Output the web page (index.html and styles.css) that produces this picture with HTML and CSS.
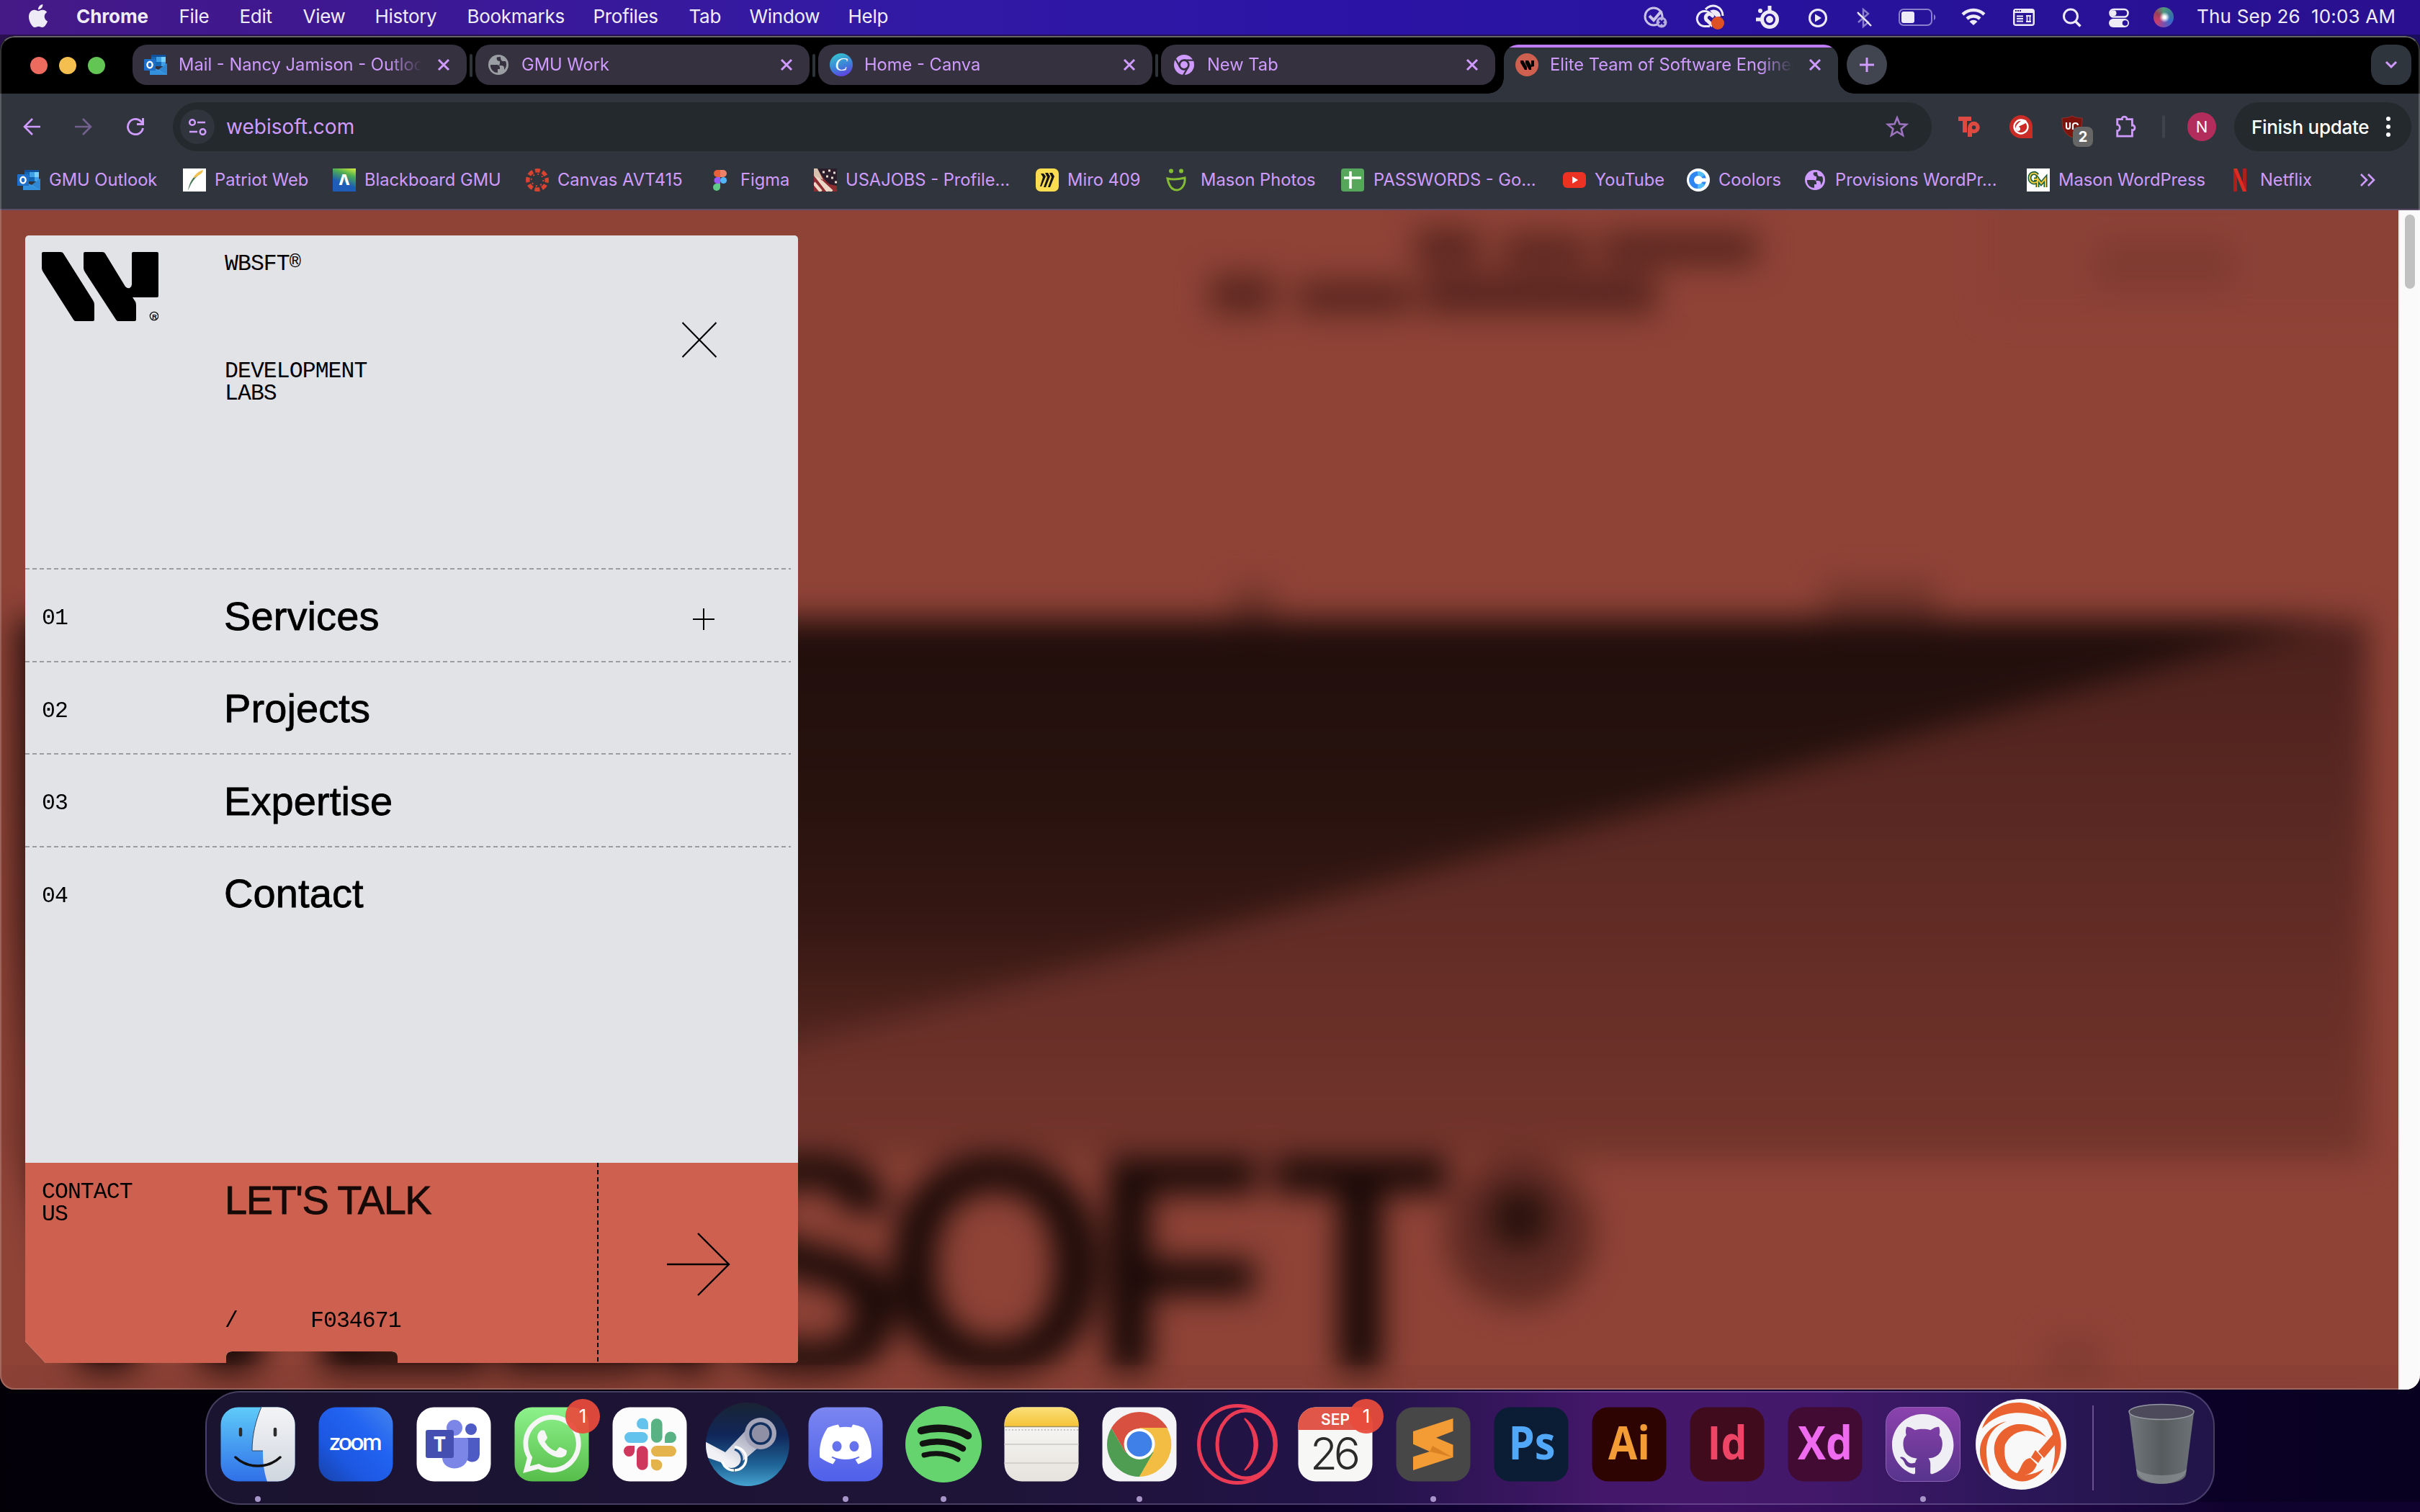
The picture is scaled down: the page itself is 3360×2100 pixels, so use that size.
FILE: index.html
```html
<!DOCTYPE html>
<html lang="en">
<head>
<meta charset="utf-8">
<title>Elite Team of Software Engineers</title>
<link rel="stylesheet" href="styles.css">
</head>
<body>
<svg class="defs" width="0" height="0" aria-hidden="true">
  <defs>
    <symbol id="close" viewBox="0 0 18 18"><path d="M2 2l14 14M16 2L2 16" stroke="currentColor" stroke-width="3" fill="none"/></symbol>
    <symbol id="outlook" viewBox="0 0 32 32">
      <path d="M10 2h20v16H10z" fill="#1565b5"/><path d="M17 5h7v7h-7z" fill="#3fa0e6"/><path d="M24 5h6v7h-6z" fill="#72d2fb"/><path d="M24 12h6v6h-6z" fill="#3fa0e6"/><path d="M10 2h20v3H10z" fill="#11509a"/>
      <path d="M8 18l12 5 12-9v16H8z" fill="#4ba7ea"/><path d="M8 18l24 12H8z" fill="#3390dc"/><path d="M20 23l12-9v16z" fill="#2f86d3"/>
      <rect y="8" width="16" height="16" rx="1" fill="#1f6fc9"/><ellipse cx="8" cy="16" rx="3.6" ry="4.3" fill="none" stroke="#fff" stroke-width="2.4"/>
    </symbol>
    <symbol id="globe" viewBox="0 0 28 28"><circle cx="14" cy="14" r="14" fill="currentColor"/><path d="M3 14h8c4 0 5 2 5 4v2h-3v5C7 25 2.500 20 3 14zM12 3.500C11 6 12 9 16 9v3c0 2-1 3-3 3h5c3 0 4 1.500 4 4v2c3-3 4-8 2-12h-3c-2 0-4-1-4-6z" fill="var(--hole)"/></symbol>
    <symbol id="chromeglyph" viewBox="0 0 28 28"><circle cx="14" cy="14" r="14" fill="currentColor"/><circle cx="14" cy="14" r="6.400" fill="none" stroke="var(--hole)" stroke-width="2.600"/><path d="M14 7.600h13M8.500 17.200L2 6M19.500 17.200L13 28.500" stroke="var(--hole)" stroke-width="2.400"/></symbol>
    <linearGradient id="gFinder" x1="0" y1="0" x2="0" y2="1"><stop offset="0" stop-color="#5fcbf9"/><stop offset="1" stop-color="#2f6fe8"/></linearGradient>
    <linearGradient id="gFinderR" x1="0" y1="0" x2="0" y2="1"><stop offset="0" stop-color="#f4f4f6"/><stop offset="1" stop-color="#cfd6df"/></linearGradient>
    <linearGradient id="gZoom" x1="1" y1="0" x2="0" y2="1"><stop offset="0" stop-color="#4484ec"/><stop offset=".35" stop-color="#2263f2"/><stop offset=".7" stop-color="#1c57e0"/><stop offset="1" stop-color="#1741a8"/></linearGradient>
    <linearGradient id="gWa" x1="0" y1="0" x2="0" y2="1"><stop offset="0" stop-color="#8df28b"/><stop offset="1" stop-color="#57bd4a"/></linearGradient>
    <linearGradient id="gSteam" x1="0" y1="0" x2="0" y2="1"><stop offset="0" stop-color="#1a2333"/><stop offset=".4" stop-color="#10275a"/><stop offset=".75" stop-color="#1f6597"/><stop offset="1" stop-color="#46a3d0"/></linearGradient>
    <linearGradient id="gArm" x1="1" y1="0" x2="0" y2="1"><stop offset="0" stop-color="#8c8fa8"/><stop offset=".7" stop-color="#f2f2f6"/></linearGradient>
    <linearGradient id="gDiscord" x1="0" y1="0" x2="0" y2="1"><stop offset="0" stop-color="#7b86f0"/><stop offset="1" stop-color="#4f60ea"/></linearGradient>
    <linearGradient id="gNote" x1="0" y1="0" x2="0" y2="1"><stop offset="0" stop-color="#fbfbfb"/><stop offset="1" stop-color="#e6e2dc"/></linearGradient>
    <linearGradient id="gNoteTop" x1="0" y1="0" x2="0" y2="1"><stop offset="0" stop-color="#fbe07a"/><stop offset="1" stop-color="#f5c437"/></linearGradient>
    <linearGradient id="gGit" x1="0" y1="0" x2="0" y2="1"><stop offset="0" stop-color="#8c42ad"/><stop offset="1" stop-color="#57348c"/></linearGradient>
    <linearGradient id="gTrash" x1="0" y1="0" x2="1" y2="0"><stop offset="0" stop-color="#71777c"/><stop offset=".5" stop-color="#565c5e"/><stop offset="1" stop-color="#6c7276"/></linearGradient>
    <clipPath id="tile"><rect x="16.500" y="16.500" width="103" height="103" rx="24"/></clipPath>
    <clipPath id="disc"><circle cx="68" cy="68" r="58"/></clipPath>
  </defs>
</svg>

<header class="menubar">
  <svg class="apple" viewBox="0 0 24 24"><path fill="#eeeaf6" d="M12.152 6.896c-.948 0-2.415-1.078-3.96-1.04-2.04.027-3.91 1.183-4.961 3.014-2.117 3.675-.546 9.103 1.519 12.09 1.013 1.454 2.208 3.09 3.792 3.039 1.52-.065 2.09-.987 3.935-.987 1.831 0 2.35.987 3.96.948 1.637-.026 2.676-1.48 3.676-2.948 1.156-1.688 1.636-3.325 1.662-3.415-.039-.013-3.182-1.221-3.22-4.857-.026-3.04 2.48-4.494 2.597-4.559-1.429-2.09-3.623-2.324-4.39-2.376-2-.156-3.675 1.09-4.61 1.09zM15.53 3.83c.843-1.012 1.4-2.427 1.245-3.83-1.207.052-2.662.805-3.532 1.818-.78.896-1.454 2.338-1.273 3.714 1.338.104 2.715-.688 3.559-1.701"/></svg>
  <nav class="menus"><span class="app-name">Chrome</span><span>File</span><span>Edit</span><span>View</span><span>History</span><span>Bookmarks</span><span>Profiles</span><span>Tab</span><span>Window</span><span>Help</span></nav>
  <div class="status">
    <svg viewBox="0 0 60 48" opacity=".75"><circle cx="28" cy="23" r="12" fill="none" stroke="#fff" stroke-width="3"/><path d="M22 22l6 6 11-13" fill="none" stroke="#fff" stroke-width="4"/><circle cx="39" cy="31" r="7.500" fill="#e6e2f4"/><path d="M36 28l6 6M42 28l-6 6" stroke="#2a139a" stroke-width="2.500"/></svg>
    <svg viewBox="0 0 60 48"><g fill="none" stroke="#eeeaf6"><path d="M30 36.500H22A10.500 10.500 0 1 1 32 21l3 3" stroke-width="3"/><path d="M24 13A13.500 13.500 0 0 1 48 22" stroke-width="3"/><path d="M34 36l-7-7a5 5 0 1 1 7-6" stroke-width="5"/></g><path d="M30 15c6-4 15 0 15 8l-6 1z" fill="#eeeaf6"/><circle cx="41" cy="32" r="9" fill="#de5125"/></svg>
    <svg viewBox="0 0 60 48"><circle cx="33" cy="27" r="13" fill="#eeeaf6"/><circle cx="33" cy="27" r="6.500" fill="none" stroke="#2a139a" stroke-width="3"/><path d="M33 8v8M14 27h8" stroke="#eeeaf6" stroke-width="5"/><circle cx="20" cy="15" r="3" fill="#eeeaf6"/></svg>
    <svg viewBox="0 0 60 48"><circle cx="30" cy="25" r="11.500" fill="none" stroke="#eeeaf6" stroke-width="3"/><path d="M26 19.500v11l9-5.500z" fill="#eeeaf6"/></svg>
    <svg viewBox="0 0 60 48"><path d="M22 31l14-12-7-6v24l7-6-14-12" fill="none" stroke="#8d80cc" stroke-width="2.400"/><path d="M21 17l19 19" stroke="#eeeaf6" stroke-width="2.400"/></svg>
    <svg viewBox="0 0 60 48"><rect x="6" y="13" width="45" height="22" rx="6" fill="none" stroke="#8b7ecb" stroke-width="2"/><rect x="9" y="16" width="18" height="16" rx="3" fill="#eeeaf6"/><path d="M54 20c3 1 3 7 0 8z" fill="#8b7ecb"/></svg>
    <svg viewBox="0 0 60 48"><g fill="none" stroke="#eeeaf6" stroke-width="4.500"><path d="M15 20a22 22 0 0 1 30 0"/><path d="M21 26a13.500 13.500 0 0 1 18 0"/></g><path d="M24.500 30a8 8 0 0 1 11 0L30 35z" fill="#eeeaf6"/></svg>
    <svg viewBox="0 0 60 48"><rect x="15" y="12" width="30" height="24" rx="4" fill="#eeeaf6"/><path d="M17.500 18h25v15.500h-25z" fill="#2a139a"/><path d="M20 22.500h9M20 26h9M20 29.500h9M33 22h7M33 30h7M34.500 21v10M38.500 21v10" stroke="#eeeaf6" stroke-width="1.800"/><path d="M18 15h8" stroke="#2a139a" stroke-width="2" stroke-dasharray="2 1"/></svg>
    <svg viewBox="0 0 60 48"><circle cx="28" cy="22.500" r="9.500" fill="none" stroke="#eeeaf6" stroke-width="3"/><path d="M34.500 29.500l7 7" stroke="#eeeaf6" stroke-width="3.600"/></svg>
    <svg viewBox="0 0 60 48"><rect x="17.500" y="13" width="25" height="10.500" rx="5.200" fill="none" stroke="#eeeaf6" stroke-width="2.600"/><circle cx="22.500" cy="18.200" r="4" fill="#eeeaf6"/><rect x="16" y="26" width="28" height="12" rx="6" fill="#eeeaf6"/><circle cx="38.500" cy="32" r="3.800" fill="#2a139a"/></svg>
    <i class="siri"></i>
    <time>Thu Sep 26&nbsp; 10:03 AM</time>
  </div>
</header>

<main class="window">
  <div class="tabstrip">
    <div class="lights"><i class="red"></i><i class="amber"></i><i class="green"></i></div>
    <div class="tab"><svg class="fav"><use href="#outlook"/></svg><span class="title">Mail - Nancy Jamison - Outlook</span><svg class="x"><use href="#close"/></svg></div>
    <i class="sep"></i>
    <div class="tab"><svg class="fav grey glyph"><use href="#globe"/></svg><span class="title">GMU Work</span><svg class="x"><use href="#close"/></svg></div>
    <i class="sep"></i>
    <div class="tab"><span class="fav canva">C</span><span class="title">Home - Canva</span><svg class="x"><use href="#close"/></svg></div>
    <i class="sep"></i>
    <div class="tab last"><svg class="fav glyph"><use href="#chromeglyph"/></svg><span class="title">New Tab</span><svg class="x"><use href="#close"/></svg></div>
    <div class="tab active"><svg class="fav" viewBox="0 0 32 32"><circle cx="16" cy="16" r="16" fill="#cd604f"/><path d="M7 10h4l5 9v4h-3L7 13zM14 10h4l4 7v-7h4v8l-4 1v4h-3l-5-9z" fill="#000"/></svg><span class="title">Elite Team of Software Engineers</span><svg class="x"><use href="#close"/></svg></div>
    <button class="newtab"><svg viewBox="0 0 20 20"><path d="M10 0v20M0 10h20" stroke="#cf9bff" stroke-width="3"/></svg></button>
    <button class="tabsearch"><svg viewBox="0 0 18 18"><path d="M2 5l7 7 7-7" stroke="#cf9bff" stroke-width="3" fill="none"/></svg></button>
  </div>

  <div class="toolbar">
    <div class="navs">
      <svg viewBox="0 0 24 24"><path d="M24 12H2M13 1L2 12l11 11" stroke="#cf9bff" stroke-width="2.600" fill="none"/></svg>
      <svg viewBox="0 0 24 24" opacity=".42"><path d="M0 12h22M11 1l11 11-11 11" stroke="#cf9bff" stroke-width="2.600" fill="none"/></svg>
      <svg viewBox="0 0 24 24"><path d="M22.500 14A10.600 10.600 0 1 1 20 5l2 2.500" stroke="#cf9bff" stroke-width="2.800" fill="none"/><path d="M24 0v10H14V7h7V0z" fill="#cf9bff"/></svg>
    </div>
    <div class="omnibox">
      <span class="siteinfo"><svg viewBox="0 0 26 24"><g fill="none" stroke="#cf9bff" stroke-width="2.600"><circle cx="6" cy="6" r="3.800"/><path d="M13 6h11M2 19h11"/><circle cx="20.500" cy="19" r="3.800"/></g></svg></span>
      <span class="url">webisoft.com</span>
      <svg class="star" viewBox="0 0 32 32"><path d="M16 3.500l3.500 8.700 9.300.7-7.200 6 2.400 9.100-8-5-8 5 2.400-9.100-7.200-6 9.300-.7z" fill="none" stroke="#9c74bf" stroke-width="2.600"/></svg>
    </div>
    <div class="exts">
      <svg viewBox="0 0 32 32"><path d="M1 2h18v6h-6v16H7V8H1z" fill="#de4a41"/><circle cx="22.500" cy="17" r="5.500" fill="none" stroke="#de4a41" stroke-width="5.500"/><path d="M14 17h6v13h-6z" fill="#de4a41"/></svg>
      <svg viewBox="0 0 32 32"><path d="M16 0a16 16 0 0 1 16 16v16H16a16 16 0 0 1 0-32z" fill="#c92b26"/><circle cx="16" cy="16" r="9.500" fill="none" stroke="#fff" stroke-width="2.400"/><path d="M8 21C12 14 17 15 24 10l-1-3-4-1C14 9 8 13 8 21z" fill="#fff"/><circle cx="12" cy="19" r="3" fill="#fff"/></svg>
      <div class="ublock"><svg viewBox="0 0 32 32"><path d="M16 1c4 2 8 3 14 3 0 14-2 21-14 27C4 25 2 18 2 4c6 0 10-1 14-3z" fill="#7c130d" stroke="#a33" stroke-width=".8"/><path d="M8 10v6c0 4 5 4 5 0v-6M17 20v-6c0-4 7-4 7 0" fill="none" stroke="#fff" stroke-width="2.200"/></svg><b>2</b></div>
      <svg viewBox="0 0 32 34"><path d="M4 6h7c-1-5 8-5 7 0h8v9c5-1 5 8 0 7v9H4v-8c5 0 5-9 0-9z" fill="none" stroke="#cf9bff" stroke-width="3"/></svg>
      <i class="rule"></i>
      <span class="avatar">N</span>
    </div>
    <div class="update"><span>Finish update</span><i class="dots"></i></div>
  </div>

  <div class="bookmarks">
    <span><svg><use href="#outlook"/></svg>GMU Outlook</span>
    <span><svg viewBox="0 0 32 32"><path fill="#fff" d="M0 0h32v32H0z"/><path d="M7 31C9 18 15 9 25 6c-8 7-13 12-18 25z" fill="#487a5a"/><path d="M14 13c4-6 8-9 14-11-1 6-6 7-12 11z" fill="#f0c04a"/></svg>Patriot Web</span>
    <span><i class="bb">Λ</i>Blackboard GMU</span>
    <span><svg viewBox="0 0 32 32"><circle cx="16" cy="16" r="13.200" fill="none" stroke="#d9432f" stroke-width="5.500" stroke-dasharray="7 3.367" stroke-dashoffset="3.500"/><circle cx="16" cy="16" r="8.200" fill="none" stroke="#d9432f" stroke-width="2" stroke-dasharray="2 4.440"/></svg>Canvas AVT415</span>
    <span><svg viewBox="0 0 32 32"><path d="M16 2v10h-4a5 5 0 0 1 0-10z" fill="#e8603c"/><path d="M16 2h4a5 5 0 0 1 0 10h-4z" fill="#ee8169"/><path d="M16 12v9h-4a4.500 4.500 0 0 1 0-9z" fill="#9a5bf5"/><circle cx="20.500" cy="16.500" r="4.600" fill="#53b4f8"/><path d="M16 21v5a5 5 0 1 1-5-5z" fill="#5fca86"/></svg>Figma</span>
    <span><svg viewBox="0 0 32 32"><path fill="#8d2c31" d="M0 0h32v32H0z"/><path d="M0 6l20 26M10 18l15 14M0 20l10 12" stroke="#ecd8c6" stroke-width="4.500"/><path d="M4 0h28v24l-10-2C14 16 10 8 4 0z" fill="#2b1d2a"/><path d="M12 5h3M20 3h3M27 6h3M17 11h3M24 13h3M29 19h3" stroke="#e9d9cf" stroke-width="3"/><path d="M0 0h5l8 16-13-6z" fill="#d8bfae"/></svg>USAJOBS - Profile...</span>
    <span><svg viewBox="0 0 32 32"><rect width="32" height="32" rx="7" fill="#fbdd52"/><path d="M7 7h4l3 4-6 14H6l4-13zM13 6h4l3 5-6 15h-3l5-14zM19 6h4l3 5-6 15h-3l5-14z" fill="#161616"/></svg>Miro 409</span>
    <span class="wide"><svg viewBox="0 0 32 32"><circle cx="8" cy="3.500" r="3" fill="#85bd32"/><circle cx="22" cy="3.500" r="3" fill="#85bd32"/><path d="M3 14c8 2 16 1 24-1 1 10-5 17-11 17S5 25 3 14z" fill="none" stroke="#85bd32" stroke-width="3"/></svg>Mason Photos</span>
    <span class="mid"><svg viewBox="0 0 32 32"><rect width="32" height="32" rx="4" fill="#56a75c"/><path d="M13 4v24M4 13h24" stroke="#fff" stroke-width="3.600"/></svg>PASSWORDS - Go...</span>
    <span><svg viewBox="0 0 32 32"><rect y="5" width="32" height="22" rx="6" fill="#ec3323"/><path d="M13 11v10l8-5z" fill="#fff"/></svg>YouTube</span>
    <span><svg viewBox="0 0 32 32"><circle cx="16" cy="16" r="16" fill="#fff"/><circle cx="15" cy="16" r="12" fill="#2f86f3"/><path d="M15 4a12 12 0 0 1 10 5l-4 3-6-3zM15 28a12 12 0 0 0 10-5l-4-3-6 3z" fill="#55bdf8"/><circle cx="16" cy="16" r="6" fill="#fff"/><path d="M16 13.500h12v5H16z" fill="#fff"/></svg>Coolors</span>
    <span><svg class="glyph"><use href="#globe"/></svg>Provisions WordPr...</span>
    <span><svg viewBox="0 0 32 32"><path fill="#fff" d="M0 0h32v32H0z"/><g fill="none" stroke="#17603f" stroke-width="5"><path d="M15 9C11 4 4 7 4 13s6 9 11 5v-3h-5M15 26V14l5 7 6-7v12"/></g><g fill="none" stroke="#f0c93f" stroke-width="2"><path d="M15 9C11 4 4 7 4 13s6 9 11 5v-3h-5M15 26V14l5 7 6-7v12"/></g></svg>Mason WordPress</span>
    <span><svg viewBox="0 0 32 32"><path d="M7 0h5v32H7zM20 0h5v32h-5z" fill="#ad1f1c"/><path d="M7 0h5l13 32h-5z" fill="#dd2c25"/></svg>Netflix</span>
    <svg class="more" viewBox="0 0 22 18"><path d="M2 1l8 8-8 8M12 1l8 8-8 8" fill="none" stroke="#cf9bff" stroke-width="2.600"/></svg>
  </div>

  <div class="page">
    <svg class="backdrop" viewBox="0 292 3330 1638" preserveAspectRatio="none">
      <defs>
        <filter id="soft" x="-5%" y="-10%" width="110%" height="120%" color-interpolation-filters="sRGB"><feGaussianBlur stdDeviation="22"/></filter>
        <linearGradient id="panelShade" gradientUnits="userSpaceOnUse" x1="0" y1="867" x2="0" y2="1608"><stop offset="0" stop-color="#4c211d"/><stop offset="1" stop-color="#73352c"/></linearGradient>
        <linearGradient id="wedge" gradientUnits="userSpaceOnUse" x1="0" y1="867" x2="0" y2="1500"><stop offset="0" stop-color="#210e0c"/><stop offset=".35" stop-color="#27120e"/><stop offset=".65" stop-color="#351713"/><stop offset="1" stop-color="#5c2922"/></linearGradient>
      </defs>
      <path fill="#8f4337" d="M0 292h3330v1638H0z"/>
      <g filter="url(#soft)">
        <path d="M1965 318h90v50h-90zM2085 326h120v42h-120zM2225 322h215v46h-215zM1680 382h90v54h-90zM1800 390h160v46h-160zM1975 380h325v56h-325z" fill="#582620"/>
        <path d="M2760 250h640v180h-640z" fill="#8b4136"/><path d="M2910 335h190v66h-190z" fill="#7f3b31"/>
        <path d="M1710 815h60v60h-60zM2530 810h160v60h-160z" fill="#70342b"/>
        <path d="M24 860h3264v750H24z" fill="url(#panelShade)"/>
        <path d="M24 860h3216L1108 1450 560 1600H24z" fill="url(#wedge)"/>
        <g transform="scale(.95 1)"><text x="42 442 705 947 1037 1287 1590 1856" y="1907" class="hero">WEBISOFT</text></g>
        <circle cx="2110" cy="1712" r="104" fill="#5e2a23"/><circle cx="2110" cy="1692" r="42" fill="#28110d"/>
        <path d="M2840 1860h80v60h-80z" fill="#803c32"/>
      </g>
      <path d="M0 1900h3330v40H0z" fill="#7c3a30" opacity=".4" filter="url(#soft)"/>
    </svg>
    <section class="panel">
      <div class="head">
        <svg class="logo" viewBox="58 350 162 96"><path d="M60 350H84q3 0 4 2L129 417q2 3 2 6V444q0 2-2 2H105q-2 0-3-2L60 378q-2-3-2-6V352q0-2 2-2zM118 350H142q3 0 4 2L174 398q3 3 6 2 3-2 3-5V352q0-2 2-2H218q2 0 2 2V411q0 2-2 2H184L188 419q1 2 1 5V444q0 2-2 2H164q-2 0-3-2L118 378q-2-3-2-6V352q0-2 2-2z"/><circle cx="214" cy="439" r="5.700" fill="none" stroke="#000" stroke-width="1.200"/><text x="214" y="442.500" font-size="9" font-weight="bold" text-anchor="middle" font-family="Liberation Sans">R</text></svg>
        <div class="brand"><p>WBSFT<sup>®</sup></p><p>DEVELOPMENT<br>LABS</p></div>
        <svg class="dismiss" viewBox="0 0 48 50"><path d="M.5 1l47 48M47.500 1L.5 49" stroke="#000" stroke-width="2.200"/></svg>
      </div>
      <ol class="links">
        <li><span class="num">01</span><a>Services</a><svg viewBox="0 0 30 30"><path d="M15 0v30M0 15h30" stroke="#000" stroke-width="2"/></svg></li>
        <li><span class="num">02</span><a>Projects</a></li>
        <li><span class="num">03</span><a>Expertise</a></li>
        <li><span class="num">04</span><a>Contact</a></li>
      </ol>
      <div class="contact">
        <p class="label">CONTACT<br>US</p>
        <div class="talk"><h2>LET'S TALK</h2><p class="code"><span>/</span><span>F034671</span></p></div>
        <div class="go"><svg viewBox="0 0 88 88"><path d="M0 44h86M43 1l43 43-43 43" fill="none" stroke="#000" stroke-width="2.400"/></svg></div>
      </div>
    </section>
    <div class="scrollbar"><i></i></div>
  </div>
</main>

<footer class="dock">
  <div class="run"><svg viewBox="0 0 136 136"><g clip-path="url(#tile)"><path fill="url(#gFinder)" d="M16 16h104v104H16z"/><path d="M73 16C65 35 60 55 60 77h15c0 15 1 28 6 43h40V16z" fill="url(#gFinderR)"/><path d="M73 16C65 35 60 55 60 77h15" fill="none" stroke="#30465e" stroke-width="1"/></g><path d="M44 47v8M92 47v8" stroke="#2b2b2b" stroke-width="4.500" stroke-linecap="round"/><path d="M37 86c17 16 45 16 62 0" fill="none" stroke="#111" stroke-width="3.500" stroke-linecap="round"/></svg></div>
  <div><svg viewBox="0 0 136 136"><rect x="16.500" y="16.500" width="103" height="103" rx="24" fill="url(#gZoom)"/><text x="68" y="76" text-anchor="middle" textLength="73" font-size="33" font-weight="600" font-family="Lato" fill="#fff">zoom</text></svg></div>
  <div><svg viewBox="0 0 136 136"><rect x="16.500" y="16.500" width="103" height="103" rx="24" fill="#fff"/><circle cx="69" cy="45" r="11" fill="#7c86e6"/><circle cx="92" cy="47" r="8" fill="#4f5bc4"/><path d="M74 59h30v22c0 13-14 14-18 8z" fill="#4f5bc4"/><path d="M52 59h33q3 0 3 3v21c0 24-36 24-36 3z" fill="#7c86e6"/><rect x="29" y="48" width="39" height="39" rx="3" fill="#454fb2"/><text x="48.500" y="78" text-anchor="middle" font-size="29" font-weight="bold" font-family="Open Sans" fill="#fff">T</text></svg></div>
  <div><svg viewBox="0 0 136 136"><rect x="16.500" y="16.500" width="103" height="103" rx="24" fill="url(#gWa)"/><path transform="translate(28 27) scale(3.370)" fill="#f6f6f6" d="M17.472 14.382c-.297-.149-1.758-.867-2.03-.967-.273-.099-.471-.148-.67.15-.197.297-.767.966-.94 1.164-.173.199-.347.223-.644.075-.297-.15-1.255-.463-2.39-1.475-.883-.788-1.48-1.761-1.653-2.059-.173-.297-.018-.458.13-.606.134-.133.298-.347.446-.52.149-.174.198-.298.298-.497.099-.198.05-.371-.025-.52-.075-.149-.669-1.612-.916-2.207-.242-.579-.487-.5-.669-.51-.173-.008-.371-.01-.57-.01-.198 0-.52.074-.792.372-.272.297-1.04 1.016-1.04 2.479 0 1.462 1.065 2.875 1.213 3.074.149.198 2.096 3.2 5.077 4.487.709.306 1.262.489 1.694.625.712.227 1.36.195 1.871.118.571-.085 1.758-.719 2.006-1.413.248-.694.248-1.289.173-1.413-.074-.124-.272-.198-.57-.347m-5.421 7.403h-.004a9.87 9.87 0 01-5.031-1.378l-.361-.214-3.741.982.998-3.648-.235-.374a9.86 9.86 0 01-1.51-5.26c.001-5.45 4.436-9.884 9.888-9.884 2.64 0 5.122 1.03 6.988 2.898a9.825 9.825 0 012.893 6.994c-.003 5.45-4.437 9.884-9.885 9.884m8.413-18.297A11.815 11.815 0 0012.05 0C5.495 0 .16 5.335.157 11.892c0 2.096.547 4.142 1.588 5.945L.057 24l6.305-1.654a11.882 11.882 0 005.683 1.448h.005c6.554 0 11.89-5.335 11.893-11.893a11.821 11.821 0 00-3.48-8.413z"/></svg><b class="badge">1</b></div>
  <div><svg viewBox="0 0 136 136"><rect x="16.500" y="16.500" width="103" height="103" rx="24" fill="#fcfcfc"/><path d="M58 51h-17.500a7.500 7.500 0 0 0 0 15H58a7.500 7.500 0 0 0 0-15zM66 47V39.500a8 8 0 0 0-16 0 7.500 7.500 0 0 0 8 7.500z" fill="#63c3ec"/><path d="M70 40a7.800 7.800 0 0 1 15.600 0v18a7.800 7.800 0 0 1-15.600 0zM89 66V58.500a8 8 0 0 1 16 0 7.500 7.500 0 0 1-8 7.500z" fill="#58b283"/><path d="M50 78a7.800 7.800 0 0 1 15.600 0v18a7.800 7.800 0 0 1-15.600 0zM47 70v7.500a7.500 7.500 0 0 1-15 0c0-4 3-7.500 7.500-7.500z" fill="#cf375c"/><path d="M77.500 70h20a7.500 7.500 0 0 1 0 15h-20a7.500 7.500 0 0 1 0-15zM70 89h8a7.700 7.700 0 1 1-8 8z" fill="#e4b34c"/></svg></div>
  <div><svg viewBox="0 0 136 136"><circle cx="68" cy="68" r="58" fill="url(#gSteam)"/><g clip-path="url(#disc)"><path d="M5 62l32 17 30-32 22 20-31 27a16 16 0 0 1-27-1L5 84z" fill="url(#gArm)"/></g><circle cx="86" cy="53" r="22" fill="#a3a4b8"/><circle cx="86" cy="53" r="14" fill="#8f8fa6" stroke="#12305f" stroke-width="3.500"/><path d="M50 75a14 14 0 1 1-8 27" fill="none" stroke="#1c4f86" stroke-width="3"/><path d="M49 104a16 16 0 0 1-16-12M50 72a16 16 0 0 1 0 32" fill="none" stroke="#fff" stroke-width="3.500"/></svg></div>
  <div class="run"><svg viewBox="0 0 136 136"><rect x="16.500" y="16.500" width="103" height="103" rx="24" fill="url(#gDiscord)"/><path transform="translate(32 32) scale(3)" fill="#fff" d="M20.317 4.3698a19.7913 19.7913 0 00-4.8851-1.5152.0741.0741 0 00-.0785.0371c-.211.3753-.4447.8648-.6083 1.2495-1.8447-.2762-3.68-.2762-5.4868 0-.1636-.3933-.4058-.8742-.6177-1.2495a.077.077 0 00-.0785-.037 19.7363 19.7363 0 00-4.8852 1.515.0699.0699 0 00-.0321.0277C.5334 9.0458-.319 13.5799.0992 18.0578a.0824.0824 0 00.0312.0561c2.0528 1.5076 4.0413 2.4228 5.9929 3.0294a.0777.0777 0 00.0842-.0276c.4616-.6304.8731-1.2952 1.226-1.9942a.076.076 0 00-.0416-.1057c-.6528-.2476-1.2743-.5495-1.8722-.8923a.077.077 0 01-.0076-.1277c.1258-.0943.2517-.1923.3718-.2914a.0743.0743 0 01.0776-.0105c3.9278 1.7933 8.18 1.7933 12.0614 0a.0739.0739 0 01.0785.0095c.1202.099.246.1981.3728.2924a.077.077 0 01-.0066.1276 12.2986 12.2986 0 01-1.873.8914.0766.0766 0 00-.0407.1067c.3604.698.7719 1.3628 1.225 1.9932a.076.076 0 00.0842.0286c1.961-.6067 3.9495-1.5219 6.0023-3.0294a.077.077 0 00.0313-.0552c.5004-5.177-.8382-9.6739-3.5485-13.6604a.061.061 0 00-.0312-.0286zM8.02 15.3312c-1.1825 0-2.1569-1.0857-2.1569-2.419 0-1.3332.9555-2.4189 2.157-2.4189 1.2108 0 2.1757 1.0952 2.1568 2.419 0 1.3332-.9555 2.4189-2.1569 2.4189zm7.9748 0c-1.1825 0-2.1569-1.0857-2.1569-2.419 0-1.3332.9554-2.4189 2.1569-2.4189 1.2108 0 2.1757 1.0952 2.1568 2.419 0 1.3332-.946 2.4189-2.1568 2.4189Z"/></svg></div>
  <div class="run"><svg viewBox="0 0 136 136"><circle cx="68" cy="68" r="53" fill="#65d46e"/><g fill="none" stroke="#121212" stroke-linecap="round"><path d="M37 49c21-6 47-4 65 7" stroke-width="10.500"/><path d="M39 67c19-5 41-3 56 7" stroke-width="8.500"/><path d="M41 83c16-4 33-2 47 6" stroke-width="7"/></g></svg></div>
  <div><svg viewBox="0 0 136 136"><g clip-path="url(#tile)"><path fill="url(#gNote)" d="M16 16h104v104H16z"/><path fill="url(#gNoteTop)" d="M16 16h104v27H16z"/><path d="M16 43.500h104" stroke="#9b8f68" stroke-width="1.500"/><path d="M18 48h102" stroke="#c4c4c0" stroke-width="2" stroke-dasharray="2 2.500"/><path d="M16 68h104M16 94h104" stroke="#d2d1cf" stroke-width="2"/></g></svg></div>
  <div class="run"><svg viewBox="0 0 136 136"><rect x="16.500" y="16.500" width="103" height="103" rx="24" fill="#f4f4f6"/><path d="M29.030 45.500A45 45 0 0 1 106.970 45.500L68 68 48.500 79.250z" fill="#d8503f"/><path d="M106 45H68l19.500 34L68 113A45 45 0 0 0 106 45z" fill="#f2bd42"/><path d="M29.030 45.500L48.500 79.250H87.500L68 113A45 45 0 0 1 29.030 45.500z" fill="#4e9d52"/><path d="M48.500 79L68 68l19.500 11L73 100z" fill="#4e9d52"/><path d="M87.500 79L68 113l16-10z" fill="#f2bd42"/><circle cx="68" cy="67.500" r="21.500" fill="#fff"/><circle cx="68" cy="67.500" r="17.500" fill="#3f80e8"/></svg></div>
  <div><svg viewBox="0 0 136 136"><g fill="none" stroke="#ea3a54" stroke-width="5"><circle cx="68" cy="68" r="53.500"/><ellipse cx="80" cy="68" rx="40" ry="47"/></g><path d="M78 32c24 18 24 54 0 72 18-22 18-50 0-72z" fill="#ea3a54" stroke="#ea3a54" stroke-width="2"/></svg></div>
  <div><svg viewBox="0 0 136 136"><g clip-path="url(#tile)"><path fill="#f7f7f5" d="M16 16h104v104H16z"/><path fill="#e0574a" d="M16 16h104v32H16z"/></g><text x="68" y="40.500" text-anchor="middle" font-size="21" font-weight="600" font-family="Inter" fill="#fff">SEP</text><text x="68" y="103" text-anchor="middle" textLength="70" font-size="62" font-weight="300" font-family="Inter" fill="#2b2b2b">26</text></svg><b class="badge">1</b></div>
  <div class="run"><svg viewBox="0 0 136 136"><rect x="16.500" y="16.500" width="103" height="103" rx="24" fill="#474747"/><path d="M40 50L95.500 32v17.700L72 58.700l23.500 10V86L40 104V85.300L63 78 40 67.700z" fill="#f39c35"/><path d="M63 78l32 8-28-16z" fill="#d98224"/></svg></div>
  <div><svg viewBox="0 0 136 136"><rect x="16.500" y="16.500" width="103" height="103" rx="22" fill="#0a1d34"/><text x="69" y="89" text-anchor="middle" textLength="65" lengthAdjust="spacingAndGlyphs" class="adobe" fill="#52a8f8">Ps</text></svg></div>
  <div><svg viewBox="0 0 136 136"><rect x="16.500" y="16.500" width="103" height="103" rx="22" fill="#2e0402"/><text x="68" y="89" text-anchor="middle" textLength="58" lengthAdjust="spacingAndGlyphs" class="adobe" fill="#f39c35">Ai</text></svg></div>
  <div><svg viewBox="0 0 136 136"><rect x="16.500" y="16.500" width="103" height="103" rx="22" fill="#400c1d"/><text x="68" y="89" text-anchor="middle" textLength="55" lengthAdjust="spacingAndGlyphs" class="adobe" fill="#ee4566">Id</text></svg></div>
  <div><svg viewBox="0 0 136 136"><rect x="16.500" y="16.500" width="103" height="103" rx="22" fill="#410b33"/><text x="68" y="89" text-anchor="middle" textLength="76" lengthAdjust="spacingAndGlyphs" class="adobe" fill="#ee6bf0">Xd</text></svg></div>
  <div class="run"><svg viewBox="0 0 136 136"><rect x="16.500" y="16.500" width="103" height="103" rx="22" fill="url(#gGit)" stroke="#8f62b8" stroke-width="1"/><path transform="translate(25 25) scale(3.560)" fill="#efeef4" d="M12 .297c-6.63 0-12 5.373-12 12 0 5.303 3.438 9.8 8.205 11.385.6.113.82-.258.82-.577 0-.285-.01-1.04-.015-2.04-3.338.724-4.042-1.61-4.042-1.61C4.422 18.07 3.633 17.7 3.633 17.7c-1.087-.744.084-.729.084-.729 1.205.084 1.838 1.236 1.838 1.236 1.07 1.835 2.809 1.305 3.495.998.108-.776.417-1.305.76-1.605-2.665-.3-5.466-1.332-5.466-5.93 0-1.31.465-2.38 1.235-3.22-.135-.303-.54-1.523.105-3.176 0 0 1.005-.322 3.3 1.23.96-.267 1.98-.399 3-.405 1.02.006 2.04.138 3 .405 2.28-1.552 3.285-1.23 3.285-1.23.645 1.653.24 2.873.12 3.176.765.84 1.23 1.91 1.23 3.22 0 4.61-2.805 5.625-5.475 5.92.42.36.81 1.096.81 2.22 0 1.606-.015 2.896-.015 3.286 0 .315.21.69.825.57C20.565 22.092 24 17.592 24 12.297c0-6.627-5.373-12-12-12"/></svg></div>
  <div><svg viewBox="0 0 136 136"><circle cx="68" cy="68" r="63" fill="#f8f8f8"/><g fill="#e9622f"><path d="M14 46C22 22 42 10 64 10c18 0 34 10 44 25C78 20 40 18 14 46z"/><path d="M92 15c22 14 34 36 31 60-2 18-9 28-14 35 12-34 6-66-17-95z"/><path d="M48 36C24 46 12 66 26 112 0 86 8 46 48 36z"/><path d="M46 109C14 74 38 40 66 40c16 0 28 7 37 18C66 34 30 62 46 109z"/><path d="M46 68c-6 36 20 54 54 34-26 36-76 12-54-34z"/><path d="M115 51c2 8 1 12 0 18l-15 18-8-9zM88 76l9 10-5 8-10-8zM81 87l9 9c-4 12-14 17-31 15 10-5 8-22 22-24z"/></g></svg></div>
  <i class="divider"></i>
  <div class="trash"><svg viewBox="0 0 136 136"><path d="M23 24L34 110c3 17 65 17 68 0L113 24z" fill="url(#gTrash)"/><path d="M33 102c3 28 67 28 70 0-8 12-60 12-70 0z" fill="#a3a9ac" opacity=".45"/><ellipse cx="68" cy="23" rx="45" ry="10.500" fill="#4d4a5c" stroke="#9498a0" stroke-width="1.500"/></svg></div>
</footer>
</body>
</html>
```
FILE: styles.css
```css
* { box-sizing: border-box; margin: 0; padding: 0; }
html, body { width: 3360px; height: 2100px; overflow: hidden; }
body {
  display: flex;
  flex-direction: column;
  font-family: Inter, "Liberation Sans", sans-serif;
  color: #cf9bff;
  background:
    linear-gradient(90deg, transparent 62%, #3d0f63 70%, #2b0b52 80%, #10022f 92%) 0 2086px / 100% 14px no-repeat,
    linear-gradient(90deg, #2a0f50 0, #1a0d60 100%) 0 0 / 100% 80px no-repeat,
    linear-gradient(90deg, #030008, #06000f 30%, #12023a 70%, #08011f);
}
button { border: 0; font: inherit; color: inherit; }
i { display: block; font-style: normal; }
.defs { position: absolute; width: 0; height: 0; }

/* System menu bar */
.menubar {
  display: flex;
  align-items: center;
  flex: none;
  height: 48px;
  background: linear-gradient(90deg, #451986 0, #3f1890 12%, #331aa4 35%, #2b14a6 55%, #27129a 80%, #2a108f 100%);
  color: #f0edf8;
  font-size: 26px;
  letter-spacing: -.3px;
}
.apple { width: 32px; height: 32px; margin: -4px 0 0 37px; }
.menus {
  display: grid;
  grid-template-columns: 142.5px 84px 88px 100px 128px 175px 133px 84px 137px 80px;
  margin: -4px 0 0 37px;
}
.app-name { font-weight: 700; letter-spacing: -.1px; }
.status {
  display: grid;
  grid-template-columns: 76px 80px 70px 64px 73px 79px 70px 67px 65px 62px 76px 279px;
  align-items: center;
  margin-left: auto;
  padding-right: 31px;
}
.status svg { width: 60px; height: 48px; }
.status time { margin-top: -4px; white-space: nowrap; letter-spacing: .2px; }
.siri {
  width: 28px; height: 28px; margin-left: 16px; border-radius: 50%;
  background: radial-gradient(circle at 55% 50%, #fff 0 8%, transparent 35%), conic-gradient(#4f9a7e, #3b7d96, #3567c9, #7e4fae, #c63f6c, #9c3e58, #4f9a7e);
}

/* Browser window */
.window {
  position: relative;
  display: flex;
  flex-direction: column;
  flex: none;
  height: 1880px;
  margin-top: 2px;
  border-radius: 20px;
  overflow: hidden;
  background: #30353d;
  font-size: 23.7px;
}
.window::after {
  content: "";
  position: absolute;
  inset: 0;
  border: 2px solid rgba(255, 255, 255, .2);
  border-top-color: rgba(255, 255, 255, .4);
  border-radius: 20px;
  pointer-events: none;
}
.tabstrip { display: flex; align-items: flex-start; flex: none; height: 80px; padding-top: 12px; background: #000; }
.lights { display: flex; gap: 16px; width: 184px; padding: 17px 0 0 42px; }
.lights i { width: 24px; height: 24px; border-radius: 50%; }
.red { background: #ed6a5e; }
.amber { background: #f5bf4f; }
.green { background: #62c554; }
.tab {
  --hole: #35313f;
  position: relative;
  display: flex;
  align-items: center;
  width: 464px;
  height: 56px;
  padding: 0 22px 0 16px;
  border-radius: 20px;
  background: #35313f;
}
.tab.last { margin-right: 12px; }
.fav { width: 32px; height: 32px; flex: none; }
.fav.glyph { width: 28px; height: 28px; margin: 0 2px; }
.grey { color: #9a9ea3; }
.canva {
  display: grid; place-items: center; border-radius: 50%;
  background: linear-gradient(160deg, #35c0cf 10%, #3e7fd8 55%, #6c2fe6);
  color: #fff; font: italic 26px/1 "Liberation Serif", serif;
}
.title {
  width: 338px;
  margin: -1px 21px 0 16px;
  overflow: hidden;
  white-space: nowrap;
  -webkit-mask-image: linear-gradient(90deg, #000 290px, transparent 338px);
  mask-image: linear-gradient(90deg, #000 290px, transparent 338px);
}
.x { width: 18px; height: 18px; flex: none; }
.sep { width: 4px; height: 32px; margin: 13px 4px 0; border-radius: 2px; background: #2f343b; }
.tab.active { height: 68px; padding-bottom: 12px; border-radius: 20px 20px 0 0; background: linear-gradient(#c07dfb 4px, #30353d 4px); }
.tab.active::before, .tab.active::after {
  content: ""; position: absolute; bottom: 0; width: 22px; height: 22px;
}
.tab.active::before { left: -22px; background: radial-gradient(circle at 0 0, transparent 21.5px, #30353d 22px); }
.tab.active::after { right: -22px; background: radial-gradient(circle at 100% 0, transparent 21.5px, #30353d 22px); }
.newtab { display: grid; place-items: center; width: 56px; height: 56px; margin-left: 12px; border-radius: 50%; background: #41454f; position: relative; }
.newtab svg { width: 20px; height: 20px; }
.tabsearch { display: grid; place-items: center; width: 56px; height: 56px; margin: 0 12px 0 auto; border-radius: 20px; background: #2f353d; }
.tabsearch svg { width: 18px; height: 18px; }

.toolbar { display: flex; align-items: center; flex: none; height: 92px; padding: 0 12px 0 32px; }
.navs { display: flex; gap: 48px; width: 208px; }
.navs svg { width: 24px; height: 24px; }
.omnibox { display: flex; align-items: center; width: 2442px; height: 68px; padding: 0 32px 0 10px; border-radius: 34px; background: #24292d; font-size: 28px; }
.siteinfo { display: grid; place-items: center; width: 48px; height: 48px; border-radius: 50%; background: #30353d; }
.siteinfo svg { width: 26px; height: 24px; }
.url { margin-left: 16px; }
.star { width: 32px; height: 32px; margin-left: auto; }
.exts {
  display: grid;
  grid-template-columns: 72px 71px 74px 67px 35px 48px;
  align-items: center;
  margin-left: 36px;
}
.exts svg { width: 32px; height: 32px; display: block; }
.ublock { position: relative; }
.ublock b {
  position: absolute; left: 17px; top: 16px; width: 28px; height: 28px; border-radius: 8px;
  background: #666; color: #fff; font-size: 20px; line-height: 28px; text-align: center;
}
.rule { width: 4px; height: 32px; border-radius: 2px; background: #3e434e; }
.avatar { width: 40px; height: 40px; border-radius: 50%; background: #b32d5c; color: #fff; font-size: 22px; line-height: 40px; text-align: center; }
.update { display: flex; align-items: center; width: 246px; height: 68px; margin-left: auto; padding: 0 29px 0 24px; border-radius: 34px; background: #24292d; color: #fff; font-size: 26px; white-space: nowrap; letter-spacing: -.3px; font-weight: 500; }
.dots { flex: none; width: 6px; height: 6px; margin-left: auto; border-radius: 50%; background: #fff; box-shadow: 0 -11px #fff, 0 11px #fff; }

.bookmarks {
  --hole: #30353d;
  display: grid;
  grid-template-columns: 230px 208px 268px 254px 146px 308px 180px 244px 308px 172px 162px 310px 280px 182px 22px;
  align-items: center;
  flex: none;
  height: 56px;
  margin-bottom: 14px;
  padding-left: 24px;
}
.bookmarks span { display: flex; align-items: center; gap: 12px; white-space: nowrap; line-height: 28px; }
.bookmarks .wide { gap: 17px; }
.bookmarks .mid { gap: 13px; }
.bookmarks svg { width: 32px; height: 32px; flex: none; }
.bookmarks svg.glyph { width: 28px; height: 28px; margin: 0 2px; }
.bookmarks svg.more { width: 22px; height: 18px; }
.bb { width: 32px; height: 32px; background: linear-gradient(200deg, #d9f03c 0, #4fae50 28%, #1f5cb8 62%); color: #fff; font-size: 20px; font-weight: 800; line-height: 32px; text-align: center; }

/* Web page */
.page { position: relative; display: flex; flex: 1; padding: 35px 0 0 35px; background: #8f4337; box-shadow: 0 -2px #5a4b68; }
.backdrop { position: absolute; left: 0; top: 0; width: 3330px; height: 1638px; }
.hero { font: bold 432px "Liberation Sans", Arial, sans-serif; fill: #180907; }
.scrollbar { width: 30px; margin: -35px 0 0 auto; padding: 6px 7px; background: #fafafa; border-left: 2px solid #e8e8e8; position: relative; }
.scrollbar i { height: 103px; border-radius: 8px; background: #c1c1c1; }

.panel {
  position: relative;
  display: flex;
  flex-direction: column;
  width: 1073px;
  height: 1566px;
  border-radius: 5px;
  overflow: hidden;
  background: #e1e3e7;
  color: #000;
  font: 31.5px/31px "Liberation Mono", monospace;
  letter-spacing: -.95px;
  clip-path: path("M0 0H1073V1566H517V1558Q517 1550 509 1550H287Q279 1550 279 1558V1566H28L0 1536Z");
}
.head { display: grid; grid-template-columns: 254px 635px 48px; align-items: start; height: 462px; padding: 23px 0 0 23px; flex: none; }
.logo { width: 162px; height: 96px; }
.brand { display: grid; gap: 118px; padding-top: 1px; }
.brand sup { font-size: 27px; line-height: 0; vertical-align: 3px; }
.dismiss { width: 48px; height: 50px; margin-top: 97px; }
.links { list-style: none; width: 1063px; }
.links li {
  display: grid;
  grid-template-columns: 253px 651px 30px;
  align-items: center;
  height: 128.5px;
  padding-left: 23px;
  background: repeating-linear-gradient(90deg, #9b9da0 0 6px, transparent 6px 10px) 0 0 / 100% 2px no-repeat;
}
.links a, .talk h2 { font: 56px/60px "Liberation Sans", Arial, sans-serif; -webkit-text-stroke: .8px currentColor; letter-spacing: .1px; }
.links a { padding-top: 5px; }
.links .num { padding-top: 11px; }
.links svg { width: 30px; height: 30px; margin-top: 14px; }
.contact { display: grid; grid-template-columns: 277px 519px 277px; height: 278px; margin-top: auto; flex: none; background: #cd604f; }
.label { padding: 25px 0 0 23px; }
.talk { display: flex; flex-direction: column; justify-content: space-between; padding: 22px 0 43px; background: repeating-linear-gradient(#000 0 6px, transparent 6px 10px) 100% 0 / 2px 100% no-repeat; }
.talk h2 { letter-spacing: -1.5px; color: #160a08; }
.code { display: grid; grid-template-columns: 119px 1fr; }
.go svg { display: block; width: 88px; height: 88px; margin: 97px 0 0 95px; }

/* Dock */
.dock {
  display: flex;
  align-items: flex-start;
  flex: none;
  width: 2790px;
  height: 158px;
  margin: 2px 0 0 285px;
  padding: 0 0 0 5px;
  border: 2px solid rgba(200, 190, 230, .25);
  border-radius: 48px;
  background: linear-gradient(90deg, #1b1430 0, #1e1438 40%, #23134a 58%, #45176b 70%, #43186b 80%, #2c1759 90%, #211548 100%);
}
.dock > div { position: relative; width: 136px; height: 154px; margin-top: 4px; flex: none; }
.dock svg { display: block; width: 136px; height: 136px; margin-left: -2px; }
.dock .run::after { content: ""; position: absolute; left: 62px; top: 140px; width: 8px; height: 8px; border-radius: 50%; background: #a795c9; }
.badge { position: absolute; left: 85px; top: 5px; width: 48px; height: 48px; border-radius: 50%; background: rgba(232, 75, 60, .94); color: #fff; font-size: 26px; font-weight: 400; line-height: 48px; text-align: center; }
.adobe { font: bold 64px "Open Sans", "Noto Sans", sans-serif; }
.divider { width: 2px; height: 118px; margin: 18px 0 0 29px; background: #6b4f91; }
.dock .trash { margin-left: 28px; }
```
